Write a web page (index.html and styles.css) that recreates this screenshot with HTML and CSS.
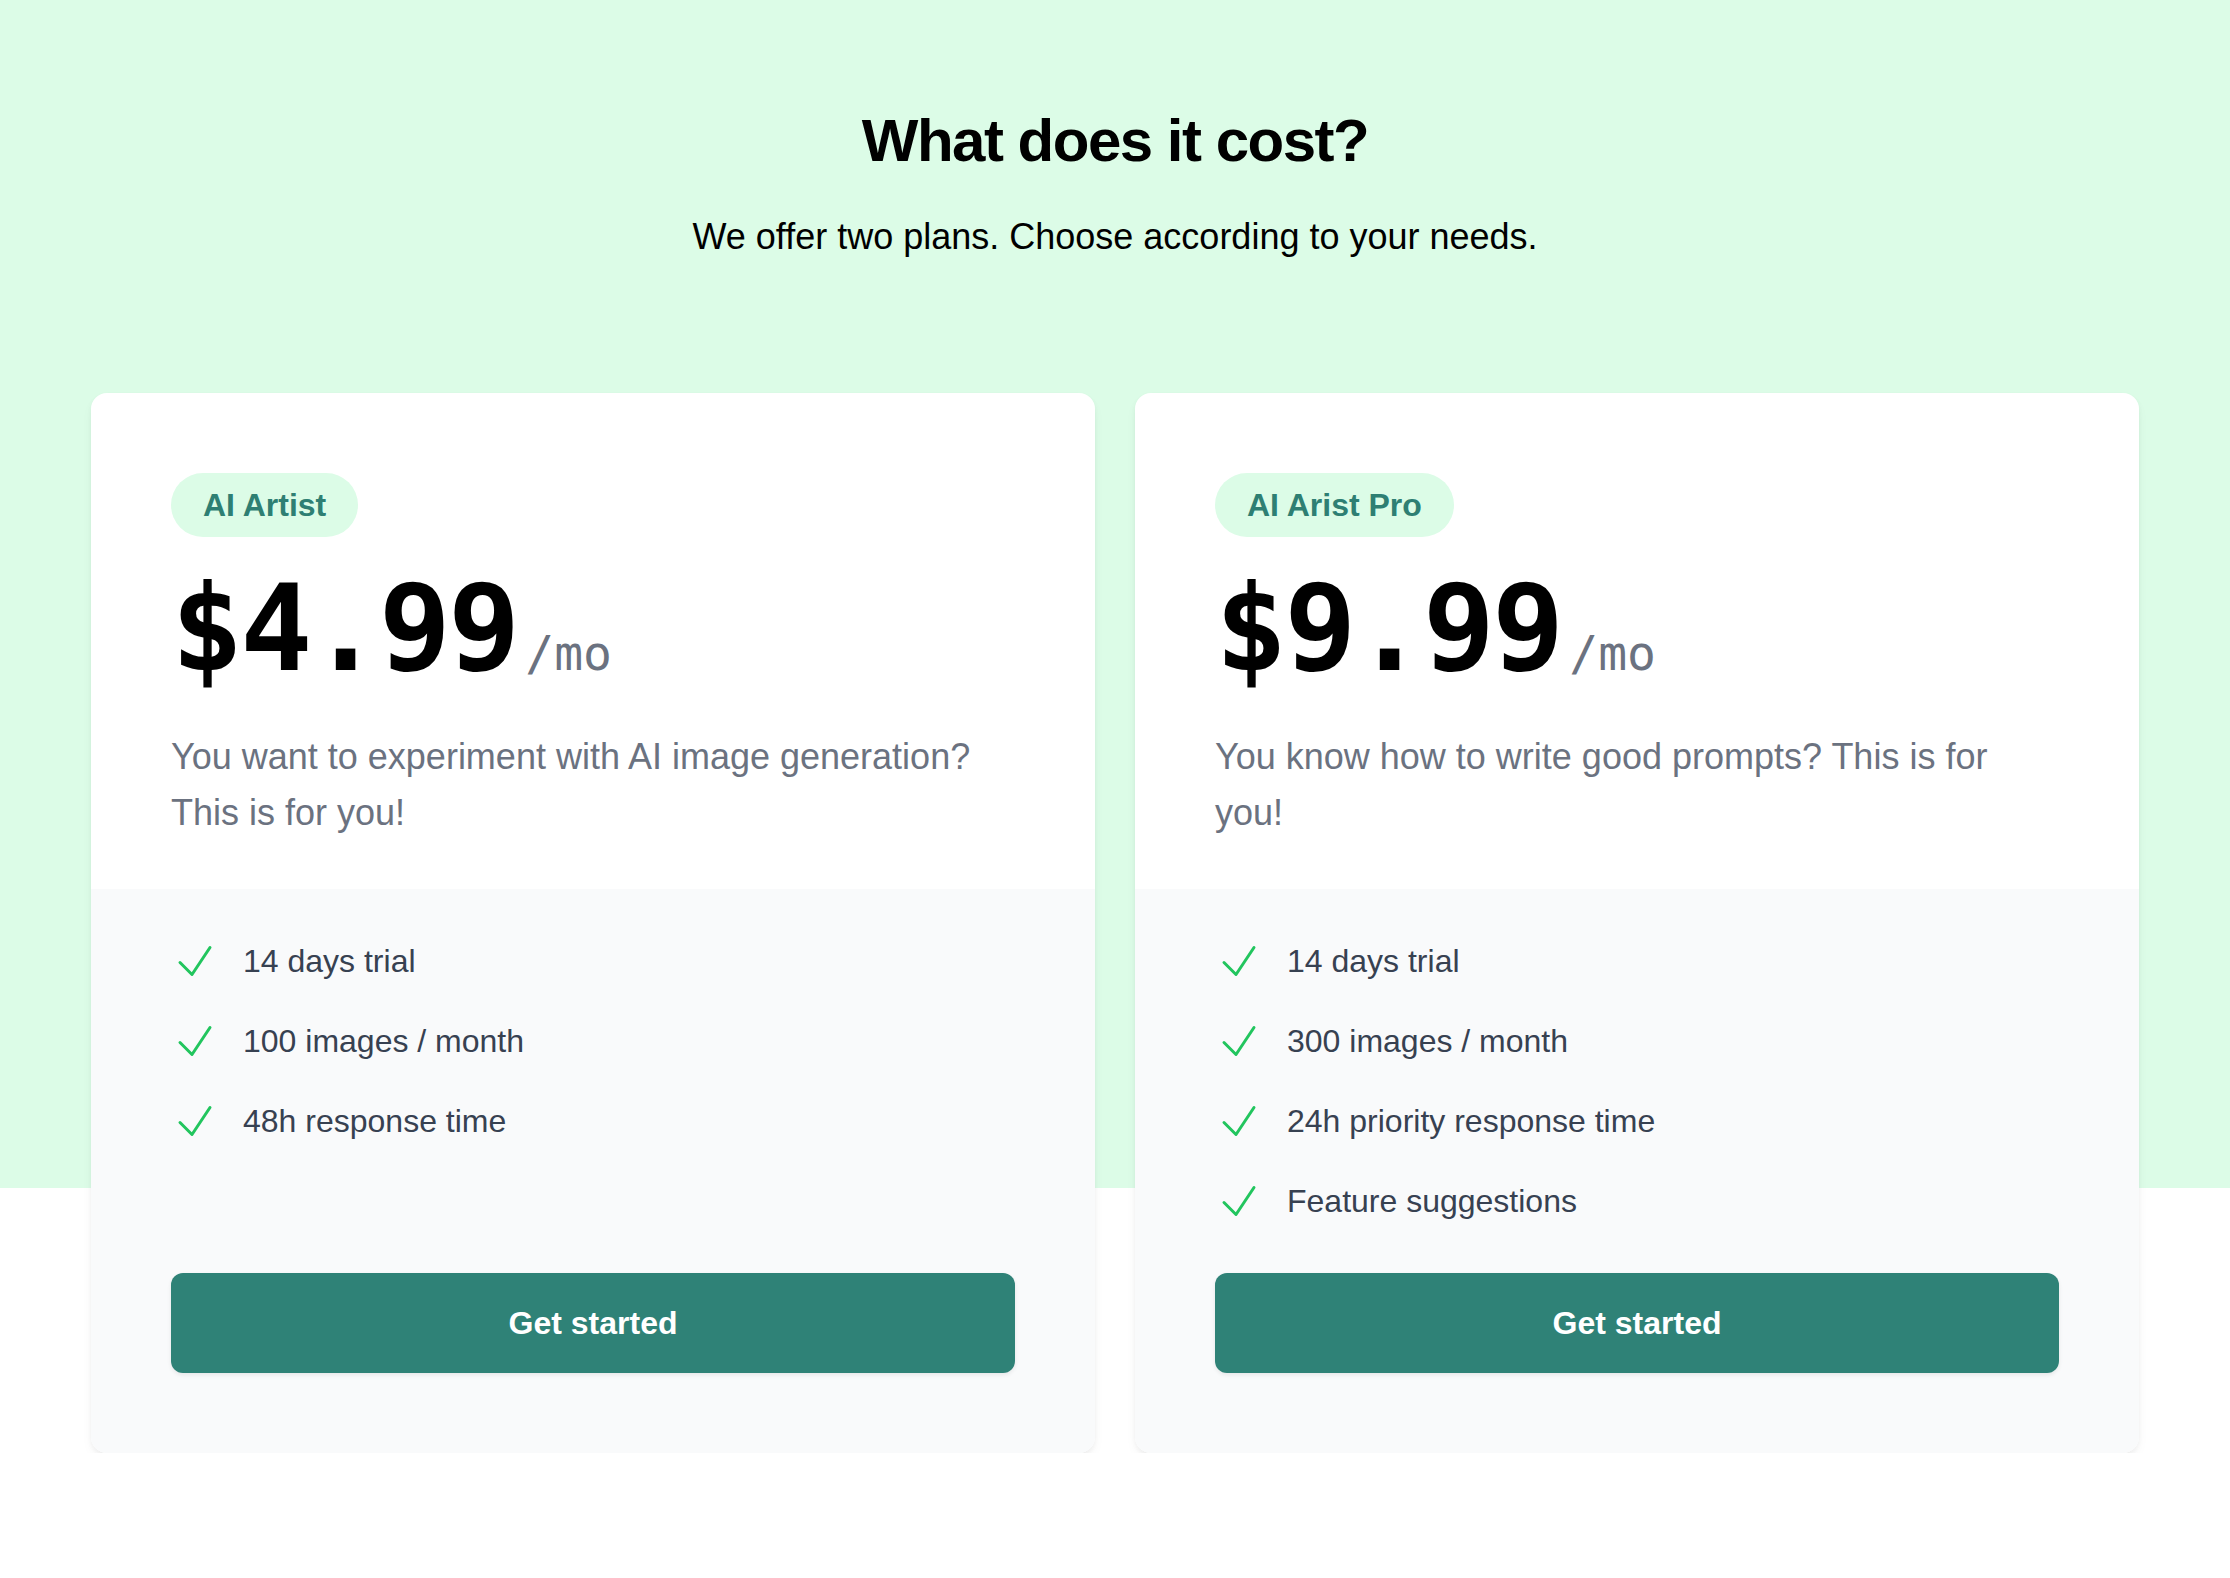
FILE: index.html
```html
<!DOCTYPE html>
<html>
<head>
    <title>What does it cost?</title>
    <link rel="stylesheet" href="styles.css">
</head>
<body>
    <section class="pricing">
        <div class="intro">
            <h2>What does it cost?</h2>
            <p>We offer two plans. Choose according to your needs.</p>
        </div>

        <div class="plans-wrap">
            <div class="plans">
                <div class="plan">
                    <div class="plan-top">
                        <div><h3 class="badge">AI Artist</h3></div>
                        <div class="price">$4.99<span class="per">/mo</span></div>
                        <p class="plan-desc">You want to experiment with AI image generation? This is for you!</p>
                    </div>
                    <div class="plan-bottom">
                        <ul class="features">
                            <li>
                                <svg class="check" viewBox="0 0 24 24" fill="none" stroke="currentColor" stroke-width="1.5"><path stroke-linecap="round" stroke-linejoin="round" d="m4.5 12.75 6 6 9-13.5"/></svg>
                                <span>14 days trial</span>
                            </li>
                            <li>
                                <svg class="check" viewBox="0 0 24 24" fill="none" stroke="currentColor" stroke-width="1.5"><path stroke-linecap="round" stroke-linejoin="round" d="m4.5 12.75 6 6 9-13.5"/></svg>
                                <span>100 images / month</span>
                            </li>
                            <li>
                                <svg class="check" viewBox="0 0 24 24" fill="none" stroke="currentColor" stroke-width="1.5"><path stroke-linecap="round" stroke-linejoin="round" d="m4.5 12.75 6 6 9-13.5"/></svg>
                                <span>48h response time</span>
                            </li>
                        </ul>
                        <a href="#" class="btn">Get started</a>
                    </div>
                </div>

                <div class="plan">
                    <div class="plan-top">
                        <div><h3 class="badge">AI Arist Pro</h3></div>
                        <div class="price">$9.99<span class="per">/mo</span></div>
                        <p class="plan-desc">You know how to write good prompts? This is for you!</p>
                    </div>
                    <div class="plan-bottom">
                        <ul class="features">
                            <li>
                                <svg class="check" viewBox="0 0 24 24" fill="none" stroke="currentColor" stroke-width="1.5"><path stroke-linecap="round" stroke-linejoin="round" d="m4.5 12.75 6 6 9-13.5"/></svg>
                                <span>14 days trial</span>
                            </li>
                            <li>
                                <svg class="check" viewBox="0 0 24 24" fill="none" stroke="currentColor" stroke-width="1.5"><path stroke-linecap="round" stroke-linejoin="round" d="m4.5 12.75 6 6 9-13.5"/></svg>
                                <span>300 images / month</span>
                            </li>
                            <li>
                                <svg class="check" viewBox="0 0 24 24" fill="none" stroke="currentColor" stroke-width="1.5"><path stroke-linecap="round" stroke-linejoin="round" d="m4.5 12.75 6 6 9-13.5"/></svg>
                                <span>24h priority response time</span>
                            </li>
                            <li>
                                <svg class="check" viewBox="0 0 24 24" fill="none" stroke="currentColor" stroke-width="1.5"><path stroke-linecap="round" stroke-linejoin="round" d="m4.5 12.75 6 6 9-13.5"/></svg>
                                <span>Feature suggestions</span>
                            </li>
                        </ul>
                        <a href="#" class="btn">Get started</a>
                    </div>
                </div>
            </div>
        </div>
    </section>
</body>
</html>
```

FILE: styles.css
```css
/* General body styles */
body {
    font-family: 'Liberation Sans', Arial, sans-serif;
    color: #000;
    background-color: #ffffff;
    margin: 0;
}

/* Intro block */
.intro {
    background-color: #dcfce7;
    text-align: center;
    padding: 105px 32px 128px;
}

.intro h2 {
    margin: 0;
    font-size: 60px;
    line-height: 72px;
    font-weight: 800;
    letter-spacing: -1.5px;
}

.intro p {
    margin: 32px 0 0;
    font-size: 36px;
    line-height: 56px;
}

/* Plans grid - green runs down to 3/4 of the cards */
.plans-wrap {
    background: linear-gradient(to bottom, #dcfce7 75%, #ffffff 75%);
    padding: 0 32px;
}

.plans {
    max-width: 2048px;
    margin: 0 auto;
    display: grid;
    grid-template-columns: 1fr 1fr;
    gap: 40px;
}

.plan {
    display: flex;
    flex-direction: column;
    border-radius: 16px;
    overflow: hidden;
    box-shadow: 0 6px 14px -4px rgba(0,0,0,0.08), 0 2px 5px rgba(0,0,0,0.04);
}

.plan-top {
    background-color: #ffffff;
    padding: 80px 80px 48px;
}

.badge {
    display: inline-flex;
    margin: 0;
    padding: 8px 32px;
    border-radius: 9999px;
    background-color: #dcfce7;
    color: #2e7f73;
    font-size: 32px;
    line-height: 48px;
    font-weight: 700;
}

.price {
    margin-top: 32px;
    display: flex;
    align-items: baseline;
    font-family: 'DejaVu Sans Mono', 'Liberation Mono', monospace;
    font-size: 120px;
    line-height: 1;
    font-weight: 800;
    letter-spacing: -3px;
}

.per {
    margin-left: 8px;
    font-size: 48px;
    line-height: 64px;
    font-weight: 500;
    letter-spacing: 0;
    color: #6b7280;
}

.plan-desc {
    margin: 40px 0 0;
    font-size: 36px;
    line-height: 56px;
    color: #6b7280;
}

.plan-bottom {
    flex: 1;
    display: flex;
    flex-direction: column;
    justify-content: space-between;
    gap: 48px;
    background-color: #f9fafb;
    padding: 48px 80px 80px;
}

.features {
    list-style: none;
    margin: 0;
    padding: 0;
    display: flex;
    flex-direction: column;
    gap: 32px;
}

.features li {
    display: flex;
    align-items: flex-start;
    font-size: 32px;
    line-height: 48px;
    color: #374151;
}

.check {
    flex-shrink: 0;
    width: 48px;
    height: 48px;
    color: #22c55e;
    margin-right: 24px;
}

/* Button styles */
.btn {
    display: flex;
    align-items: center;
    justify-content: center;
    padding: 24px 40px;
    border: 2px solid transparent;
    border-radius: 12px;
    background-color: #2f8277;
    color: #ffffff;
    font-size: 32px;
    line-height: 48px;
    font-weight: 700;
    text-decoration: none;
    box-shadow: 0 2px 4px rgba(0,0,0,0.08);
}
```
